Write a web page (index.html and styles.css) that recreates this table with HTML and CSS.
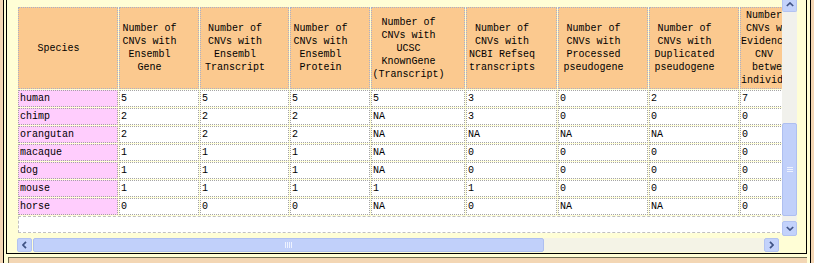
FILE: index.html
```html
<!DOCTYPE html>
<html>
<head>
<meta charset="utf-8">
<link rel="stylesheet" href="styles.css">
</head>
<body>
<div class="frame">
  <div class="panel">
    <div class="area">
      <div class="clip">
        <table class="cnv">
          <tr class="head">
            <th class="c1">Species</th>
            <th class="c2">Number of<br>CNVs with<br>Ensembl<br>Gene</th>
            <th class="c3">Number of<br>CNVs with<br>Ensembl<br>Transcript</th>
            <th class="c4">Number of<br>CNVs with<br>Ensembl<br>Protein</th>
            <th class="c5">Number of<br>CNVs with<br>UCSC<br>KnownGene<br>(Transcript)</th>
            <th class="c6">Number of<br>CNVs with<br>NCBI Refseq<br>transcripts</th>
            <th class="c7">Number of<br>CNVs with<br>Processed<br>pseudogene</th>
            <th class="c8">Number of<br>CNVs with<br>Duplicated<br>pseudogene</th>
            <th class="c9">Number of<br>CNVs with<br>Evidence of<br>CNV&nbsp;&nbsp;&nbsp;<br>between<br>individuals</th>
          </tr>
          <tr><td class="sp">human</td><td>5</td><td>5</td><td>5</td><td>5</td><td>3</td><td>0</td><td>2</td><td>7</td></tr>
          <tr><td class="sp">chimp</td><td>2</td><td>2</td><td>2</td><td>NA</td><td>3</td><td>0</td><td>0</td><td>0</td></tr>
          <tr><td class="sp">orangutan</td><td>2</td><td>2</td><td>2</td><td>NA</td><td>NA</td><td>NA</td><td>NA</td><td>0</td></tr>
          <tr><td class="sp">macaque</td><td>1</td><td>1</td><td>1</td><td>NA</td><td>0</td><td>0</td><td>0</td><td>0</td></tr>
          <tr><td class="sp">dog</td><td>1</td><td>1</td><td>1</td><td>NA</td><td>0</td><td>0</td><td>0</td><td>0</td></tr>
          <tr><td class="sp">mouse</td><td>1</td><td>1</td><td>1</td><td>1</td><td>1</td><td>0</td><td>0</td><td>0</td></tr>
          <tr><td class="sp">horse</td><td>0</td><td>0</td><td>0</td><td>NA</td><td>0</td><td>NA</td><td>NA</td><td>0</td></tr>
          <tr class="empty"><td colspan="9"></td></tr>
        </table>
      </div>
      <div class="hbar">
        <div class="btn hbtn"><svg width="5" height="8" viewBox="0 0 5 8"><path d="M4 0.8 L1 4 L4 7.2" stroke="#3f5384" stroke-width="1.7" fill="none"/></svg></div>
        <div class="thumb hthumb"><span class="hgrip"><i></i><i></i><i></i><i></i></span></div>
        <div class="htrack"></div>
        <div class="btn hbtn"><svg width="5" height="8" viewBox="0 0 5 8"><path d="M1 0.8 L4 4 L1 7.2" stroke="#3f5384" stroke-width="1.7" fill="none"/></svg></div>
      </div>
    </div>
    <div class="vbar">
      <div class="btn vup"><svg width="8" height="5" viewBox="0 0 8 5"><path d="M0.8 4 L4 1 L7.2 4" stroke="#3f5384" stroke-width="1.7" fill="none"/></svg></div>
      <div class="vtrack"><div class="thumb vthumb"><span class="vgrip"><i></i><i></i><i></i></span></div></div>
      <div class="btn vdown"><svg width="8" height="5" viewBox="0 0 8 5"><path d="M0.8 1 L4 4 L7.2 1" stroke="#3f5384" stroke-width="1.7" fill="none"/></svg></div>
    </div>
  </div>
  <div class="panel2"></div>
</div>
</body>
</html>
```

FILE: styles.css
```css
html, body {
  margin: 0;
  padding: 0;
}
body {
  width: 814px;
  height: 263px;
  overflow: hidden;
  background: #f3d6b4;
  font-family: "Liberation Mono", "Courier New", monospace;
  font-size: 10px;
  color: #000;
}
.frame {
  margin-left: 3px;
  width: 808px;
  height: 263px;
  box-sizing: border-box;
  border-left: 1px solid #000;
  border-right: 1px solid #000;
  background: #fffed6;
  padding: 0 3px 0 2px;
}
.panel {
  display: flex;
  align-items: flex-start;
  height: 254px;
  box-sizing: border-box;
  border: 1px solid #000;
  border-top: 0;
  background: #fffed6;
}
.area {
  width: 775px;
  box-sizing: border-box;
  padding: 6px 0 1px 10px;
}
.clip {
  width: 765px;
  overflow: hidden;
}
.cnv {
  table-layout: fixed;
  border-collapse: separate;
  border-spacing: 1px;
  width: 809px;
}
.cnv th, .cnv td {
  box-sizing: border-box;
  line-height: 13px;
}
.cnv th {
  height: 82px;
  background: #fbc98f;
  border: 1px dotted #aab0c8;
  padding: 1px 19px 1px 0;
  text-align: center;
  vertical-align: middle;
  font-weight: normal;
  white-space: nowrap;
  overflow: hidden;
}
.c1 { width: 100px; }
.c2 { width: 80px; }
.c3 { width: 89px; }
.c4 { width: 80px; }
.c5 { width: 94px; }
.c6 { width: 91px; }
.c7 { width: 90px; }
.c8 { width: 90px; }
.c9 { width: 85px; }
.cnv td {
  height: 17px;
  background: #ffffff;
  border: 1px dotted #a4a4a4;
  padding: 1px;
  text-align: left;
  vertical-align: middle;
  white-space: nowrap;
  overflow: hidden;
}
.cnv td.sp {
  background: #ffcdfd;
}
.empty td {
  border: 1px dashed #c0c0c0;
}
.hbar {
  margin-top: 4px;
  width: 762px;
  height: 14px;
  display: flex;
}
.btn {
  box-sizing: border-box;
  background: #c3d2fb;
  border: 1px solid #b3c3f1;
  border-radius: 2px;
  display: flex;
  align-items: center;
  justify-content: center;
}
.hbtn {
  width: 15px;
  height: 14px;
}
.thumb {
  box-sizing: border-box;
  background: #c1d0fa;
  border: 1px solid #aebff0;
  border-radius: 2px;
  display: flex;
  align-items: center;
  justify-content: center;
}
.hthumb {
  width: 511px;
  margin-left: 1px;
  height: 14px;
}
.htrack {
  flex: 1;
  background: #f4f3e6;
}
.hgrip {
  display: flex;
  gap: 1px;
}
.hgrip i {
  display: block;
  width: 1px;
  height: 6px;
  background: #eef2ff;
}
.vbar {
  width: 15px;
  height: 236px;
  display: flex;
  flex-direction: column;
}
.vup {
  height: 12px;
  border-top: 0;
  border-radius: 0 0 2px 2px;
  align-items: flex-start;
  padding-top: 2px;
}
.vtrack {
  flex: 1;
  background: #f1f1ec;
  padding-top: 111px;
}
.vthumb {
  height: 93px;
  width: 15px;
}
.vgrip {
  display: flex;
  flex-direction: column;
  gap: 1px;
}
.vgrip i {
  display: block;
  width: 6px;
  height: 1px;
  background: #eef2ff;
}
.vdown {
  height: 15px;
}
.panel2 {
  margin-top: 3px;
  margin-left: 2px;
  height: 10px;
  border-top: 1px solid #6f6d52;
  border-left: 1px solid #6f6d52;
  background: #f3d6b4;
}
```
